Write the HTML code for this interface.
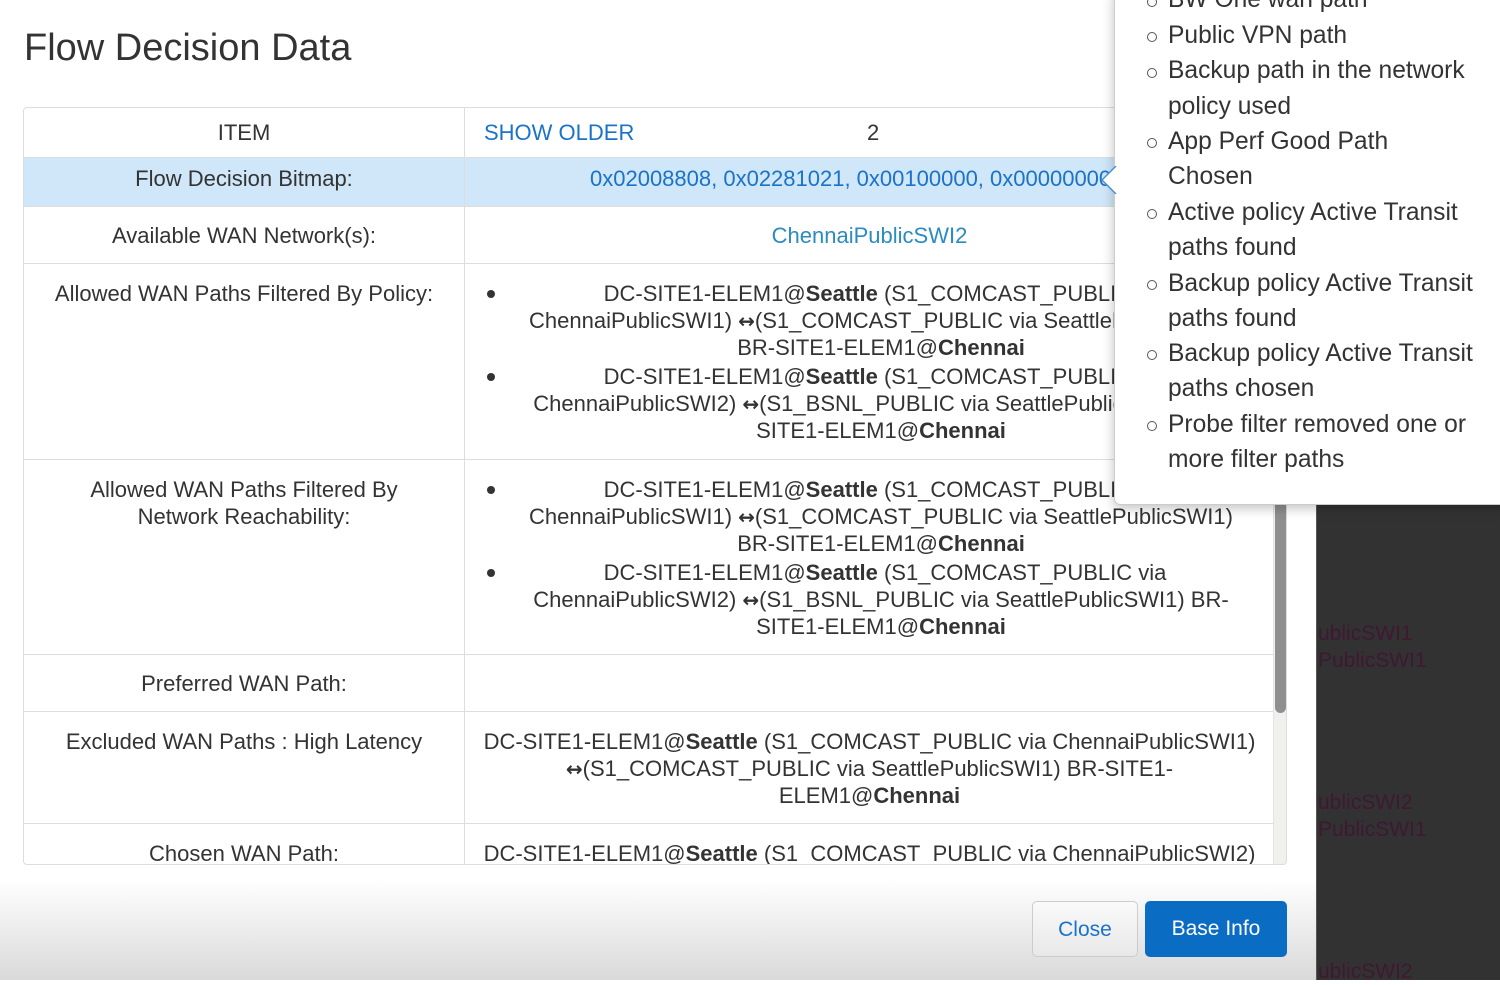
<!DOCTYPE html>
<html><head><meta charset="utf-8"><style>
*{margin:0;padding:0;box-sizing:border-box}
body{width:1500px;height:980px;overflow:hidden;background:#fff;font-family:"Liberation Sans",sans-serif;color:#333;position:relative}
.dark{position:absolute;left:1316px;top:0;width:184px;height:980px;background:#323232;border-left:1px solid #555}
.dk{position:absolute;left:1318px;color:#3f1832;font-size:21px;line-height:27px}
.modal{position:absolute;left:0;top:0;width:1316px;height:980px;background:#fff}
.foot{position:absolute;left:0;top:880px;width:1316px;height:100px;background:linear-gradient(#fff,#d9d9d9)}
h1{position:absolute;left:24px;top:27px;font-weight:normal;font-size:38px;color:#333}
.tbl{position:absolute;left:23px;top:107px;width:1264px;height:758px;border:1px solid #ddd;border-radius:4px;overflow:hidden}
.row{position:absolute;left:0;width:1249px;border-bottom:1px solid #ddd}
.c1{position:absolute;left:0;top:0;width:441px;height:100%;border-right:1px solid #ddd;text-align:center;font-size:22px;line-height:27px}
.c2{position:absolute;left:442px;top:0;width:807px;height:100%;text-align:center;font-size:22px;line-height:27px}
.l{position:absolute;left:60px;width:710px;text-align:center;white-space:nowrap;font-size:22px}
.a{font-family:"DejaVu Sans",sans-serif;font-size:20px;font-weight:bold}
.b{position:absolute;left:21px;width:8px;height:8px;border-radius:50%;background:#333}
.sb{position:absolute;left:1249px;top:0;width:14px;height:758px;background:#f0f0ee;border-left:1px solid #e4e4e4}
.th{position:absolute;left:1251px;top:380px;width:11px;height:225px;border-radius:6px;background:#8f8f8f}
.pop{position:absolute;left:1114px;top:-10px;width:400px;height:515px;background:#fff;border:1px solid #ccc;border-radius:6px;box-shadow:0 3px 12px rgba(0,0,0,.25)}
.pi{position:absolute;left:53px;font-size:24.6px;color:#333;white-space:nowrap}
.pc{position:absolute;left:32px;width:10px;height:10px;border:1.5px solid #555;border-radius:50%}
.btn{position:absolute;top:901px;height:56px;border-radius:5px;font-size:21px;text-align:center;line-height:56px}
</style></head><body>
<div class="dark"></div>
<div class="dk" style="top:620px">ublicSWI1<br>PublicSWI1</div>
<div class="dk" style="top:789px">ublicSWI2<br>PublicSWI1</div>
<div class="dk" style="top:958px">ublicSWI2</div>
<div class="modal"></div>
<div class="foot"></div>
<h1>Flow Decision Data</h1>
<div class="tbl">
 <div class="row" style="top:0;height:50px"><div class="c1" style="line-height:50px">ITEM</div><div class="c2" style="line-height:50px;text-align:left"><span style="position:absolute;left:18px;color:#1a73c8">SHOW OLDER</span><span style="position:absolute;left:401px">2</span></div></div>
 <div class="row" style="top:50px;height:49px;background:#cfe7f8"><div class="c1" style="line-height:42px">Flow Decision Bitmap:</div><div class="c2" style="line-height:42px;color:#1a73c8;text-align:left;white-space:nowrap"><span style="position:absolute;left:124px">0x02008808, 0x02281021, 0x00100000, 0x00000000</span></div></div>
 <div class="row" style="top:99px;height:57px"><div class="c1" style="line-height:58px">Available WAN Network(s):</div><div class="c2" style="line-height:58px;color:#2a8cc0">ChennaiPublicSWI2</div></div>
 <div class="row" style="top:156px;height:196px"><div class="c1" style="padding-top:16px">Allowed WAN Paths Filtered By Policy:</div><div class="c2">
  <div class="b" style="top:26px"></div>
  <div class="l" style="top:16px;left:64px">DC-SITE1-ELEM1@<b>Seattle</b> (S1_COMCAST_PUBLIC via</div>
  <div class="l" style="top:43px">ChennaiPublicSWI1) <span class="a">↔</span>(S1_COMCAST_PUBLIC via SeattlePublicSWI1)</div>
  <div class="l" style="top:70px">BR-SITE1-ELEM1@<b>Chennai</b></div>
  <div class="b" style="top:109px"></div>
  <div class="l" style="top:99px;left:64px">DC-SITE1-ELEM1@<b>Seattle</b> (S1_COMCAST_PUBLIC via</div>
  <div class="l" style="top:126px">ChennaiPublicSWI2) <span class="a">↔</span>(S1_BSNL_PUBLIC via SeattlePublicSWI1) BR-</div>
  <div class="l" style="top:153px">SITE1-ELEM1@<b>Chennai</b></div>
 </div></div>
 <div class="row" style="top:352px;height:195px"><div class="c1" style="padding-top:16px">Allowed WAN Paths Filtered By<br>Network Reachability:</div><div class="c2">
  <div class="b" style="top:26px"></div>
  <div class="l" style="top:16px;left:64px">DC-SITE1-ELEM1@<b>Seattle</b> (S1_COMCAST_PUBLIC via</div>
  <div class="l" style="top:43px">ChennaiPublicSWI1) <span class="a">↔</span>(S1_COMCAST_PUBLIC via SeattlePublicSWI1)</div>
  <div class="l" style="top:70px">BR-SITE1-ELEM1@<b>Chennai</b></div>
  <div class="b" style="top:109px"></div>
  <div class="l" style="top:99px;left:64px">DC-SITE1-ELEM1@<b>Seattle</b> (S1_COMCAST_PUBLIC via</div>
  <div class="l" style="top:126px">ChennaiPublicSWI2) <span class="a">↔</span>(S1_BSNL_PUBLIC via SeattlePublicSWI1) BR-</div>
  <div class="l" style="top:153px">SITE1-ELEM1@<b>Chennai</b></div>
 </div></div>
 <div class="row" style="top:547px;height:57px"><div class="c1" style="line-height:58px">Preferred WAN Path:</div><div class="c2"></div></div>
 <div class="row" style="top:604px;height:112px"><div class="c1" style="padding-top:16px">Excluded WAN Paths : High Latency</div><div class="c2">
  <div class="l" style="top:16px;left:0;width:807px">DC-SITE1-ELEM1@<b>Seattle</b> (S1_COMCAST_PUBLIC via ChennaiPublicSWI1)</div>
  <div class="l" style="top:43px;left:0;width:807px"><span class="a">↔</span>(S1_COMCAST_PUBLIC via SeattlePublicSWI1) BR-SITE1-</div>
  <div class="l" style="top:70px;left:0;width:807px">ELEM1@<b>Chennai</b></div>
 </div></div>
 <div class="row" style="top:716px;height:60px;border:none"><div class="c1" style="padding-top:16px">Chosen WAN Path:</div><div class="c2">
  <div class="l" style="top:16px;left:0;width:807px">DC-SITE1-ELEM1@<b>Seattle</b> (S1_COMCAST_PUBLIC via ChennaiPublicSWI2)</div>
 </div></div>
 <div class="sb"></div><div class="th"></div>
</div>
<div class="btn" style="left:1032px;width:106px;border:1px solid #ccc;background:linear-gradient(#fafafa,#e8e8e8);color:#1a73c8">Close</div>
<div class="btn" style="left:1145px;width:142px;background:#0b6cc4;color:#fff">Base Info</div>
<div class="pop">
 <svg style="position:absolute;left:-14px;top:175px" width="16" height="28"><path d="M15 0 L1 14 L15 28" fill="#fff" stroke="#4a90d0" stroke-width="1.5"/></svg>
 <div class="pc" style="top:6px"></div><div class="pi" style="top:-5px">BW One wan path</div>
 <div class="pc" style="top:41px"></div><div class="pi" style="top:31px">Public VPN path</div>
 <div class="pc" style="top:77px"></div><div class="pi" style="top:66px">Backup path in the network</div>
 <div class="pi" style="top:102px">policy used</div>
 <div class="pc" style="top:147px"></div><div class="pi" style="top:137px">App Perf Good Path</div>
 <div class="pi" style="top:172px">Chosen</div>
 <div class="pc" style="top:218px"></div><div class="pi" style="top:208px">Active policy Active Transit</div>
 <div class="pi" style="top:243px">paths found</div>
 <div class="pc" style="top:289px"></div><div class="pi" style="top:279px">Backup policy Active Transit</div>
 <div class="pi" style="top:314px">paths found</div>
 <div class="pc" style="top:359px"></div><div class="pi" style="top:349px">Backup policy Active Transit</div>
 <div class="pi" style="top:384px">paths chosen</div>
 <div class="pc" style="top:430px"></div><div class="pi" style="top:420px">Probe filter removed one or</div>
 <div class="pi" style="top:455px">more filter paths</div>
</div>
</body></html>
